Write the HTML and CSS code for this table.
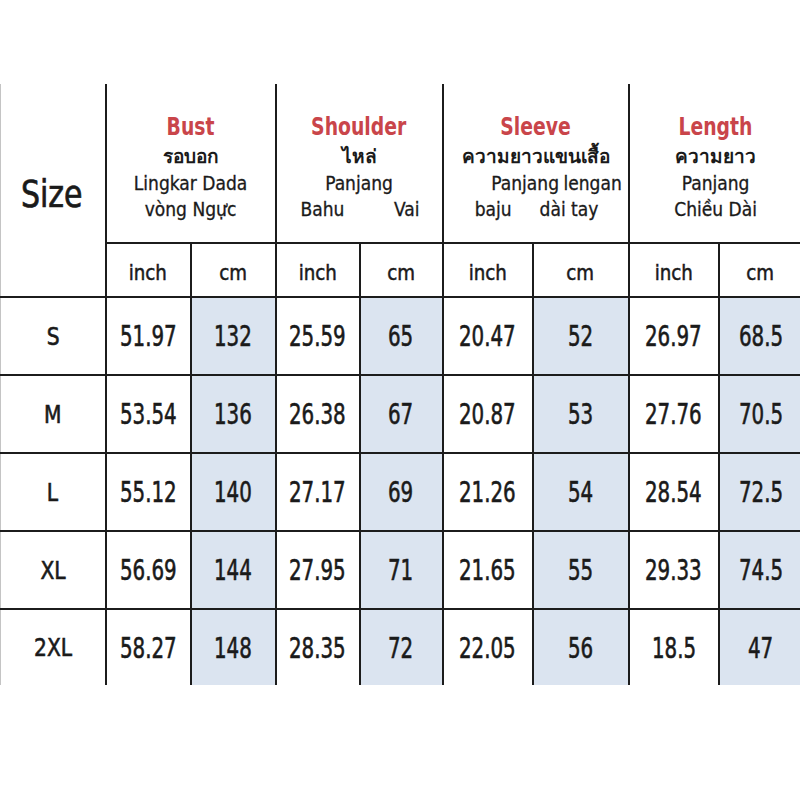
FILE: index.html
```html
<!DOCTYPE html>
<html>
<head>
<meta charset="utf-8">
<link rel="stylesheet" href="styles.css">
</head>
<body>
<div class="frame">
<table class="chart">
  <colgroup>
    <col class="c0"><col class="c1"><col class="c2"><col class="c3"><col class="c4"><col class="c5"><col class="c6"><col class="c7"><col class="c8">
  </colgroup>
  <thead>
    <tr class="head">
      <th rowspan="2" class="size-head"><span class="big">Size</span></th>
      <th colspan="2"><div class="ttl"><span>Bust</span></div><div class="th">รอบอก</div><div class="sub">Lingkar Dada</div><div class="sub">vòng Ngực</div></th>
      <th colspan="2"><div class="ttl"><span>Shoulder</span></div><div class="th">ไหล่</div><div class="sub">Panjang</div><div class="sub split"><span>Bahu</span><span>Vai</span></div></th>
      <th colspan="2"><div class="ttl"><span>Sleeve</span></div><div class="th">ความยาวแขนเสื้อ</div><div class="sub shift">Panjang lengan</div><div class="sub split2"><span>baju</span><span>dài tay</span></div></th>
      <th colspan="2"><div class="ttl"><span>Length</span></div><div class="th">ความยาว</div><div class="sub">Panjang</div><div class="sub">Chiều Dài</div></th>
    </tr>
    <tr class="units">
      <th><span class="u">inch</span></th><th><span class="u">cm</span></th><th><span class="u">inch</span></th><th><span class="u">cm</span></th><th><span class="u">inch</span></th><th><span class="u">cm</span></th><th><span class="u">inch</span></th><th><span class="u">cm</span></th>
    </tr>
  </thead>
  <tbody>
    <tr><td class="sz"><span class="l">S</span></td><td><span class="v">51.97</span></td><td class="cm"><span class="v">132</span></td><td><span class="v">25.59</span></td><td class="cm"><span class="v">65</span></td><td><span class="v">20.47</span></td><td class="cm"><span class="v">52</span></td><td><span class="v">26.97</span></td><td class="cm"><span class="v">68.5</span></td></tr>
    <tr><td class="sz"><span class="l">M</span></td><td><span class="v">53.54</span></td><td class="cm"><span class="v">136</span></td><td><span class="v">26.38</span></td><td class="cm"><span class="v">67</span></td><td><span class="v">20.87</span></td><td class="cm"><span class="v">53</span></td><td><span class="v">27.76</span></td><td class="cm"><span class="v">70.5</span></td></tr>
    <tr><td class="sz"><span class="l">L</span></td><td><span class="v">55.12</span></td><td class="cm"><span class="v">140</span></td><td><span class="v">27.17</span></td><td class="cm"><span class="v">69</span></td><td><span class="v">21.26</span></td><td class="cm"><span class="v">54</span></td><td><span class="v">28.54</span></td><td class="cm"><span class="v">72.5</span></td></tr>
    <tr><td class="sz"><span class="l">XL</span></td><td><span class="v">56.69</span></td><td class="cm"><span class="v">144</span></td><td><span class="v">27.95</span></td><td class="cm"><span class="v">71</span></td><td><span class="v">21.65</span></td><td class="cm"><span class="v">55</span></td><td><span class="v">29.33</span></td><td class="cm"><span class="v">74.5</span></td></tr>
    <tr class="last"><td class="sz"><span class="l">2XL</span></td><td><span class="v">58.27</span></td><td class="cm"><span class="v">148</span></td><td><span class="v">28.35</span></td><td class="cm"><span class="v">72</span></td><td><span class="v">22.05</span></td><td class="cm"><span class="v">56</span></td><td><span class="v">18.5</span></td><td class="cm"><span class="v">47</span></td></tr>
  </tbody>
</table>
</div>
</body>
</html>
```

FILE: styles.css
```css
html, body {
  margin: 0;
  padding: 0;
  background: #fff;
}
body {
  font-family: "DejaVu Sans Condensed", "DejaVu Sans", sans-serif;
  color: #1a1a1a;
}
.frame {
  padding-top: 84px;
  width: 800px;
  height: 602px;
  overflow: hidden;
}
.chart {
  border-collapse: collapse;
  table-layout: fixed;
  width: 802px;
}
.c0 { width: 105px; }
.c1 { width: 85px; }
.c2 { width: 85px; }
.c3 { width: 84px; }
.c4 { width: 83px; }
.c5 { width: 90px; }
.c6 { width: 96px; }
.c7 { width: 90px; }
.c8 { width: 84px; }
.chart th, .chart td {
  border: 2px solid #1c1c1c;
  padding: 0;
  text-align: center;
  vertical-align: middle;
  font-weight: normal;
}
.chart tr.head th {
  border-top: none;
  height: 150px;
  padding-top: 8px;
}
.chart th.size-head {
  border-top: none;
  border-left: 1px solid #c4c4c4;
  text-align: left;
  padding-left: 20px;
  padding-top: 4px;
}
.big {
  display: inline-block;
  font-size: 37px;
  -webkit-text-stroke: 0.7px #1a1a1a;
  transform: scaleX(0.9);
  transform-origin: left center;
}
.chart td.sz { border-left: 1px solid #c4c4c4; }
.l {
  display: inline-block;
  font-size: 25px;
  -webkit-text-stroke: 0.6px #1a1a1a;
  transform: scaleX(0.9);
}
.ttl {
  color: #c9454a;
  font-size: 24px;
  font-weight: 600;
  line-height: 30px;
}
.ttl span {
  display: inline-block;
  transform: scaleX(0.87);
}
.th { font-size: 19px; line-height: 28px; font-weight: 600; }
.sub {
  font-size: 19px;
  line-height: 26px;
  -webkit-text-stroke: 0.3px #1a1a1a;
}
.split { display: flex; justify-content: space-between; padding: 0 22px 0 24px; }
.split2 { display: flex; justify-content: center; gap: 28px; padding-left: 2px; }
.shift { padding-left: 42px; word-spacing: -1px; }
.units th { height: 52px; }
.u {
  display: inline-block;
  font-size: 22px;
  -webkit-text-stroke: 0.5px #1a1a1a;
  transform: scaleX(0.92);
  padding-top: 4px;
}
tbody td { height: 76px; }
.v {
  display: inline-block;
  font-size: 29px;
  -webkit-text-stroke: 0.6px #1a1a1a;
  transform: scaleX(0.76);
}
td.cm { background: #dbe4f0; }
tr.last td { border-bottom: none; height: 75px; }
```
